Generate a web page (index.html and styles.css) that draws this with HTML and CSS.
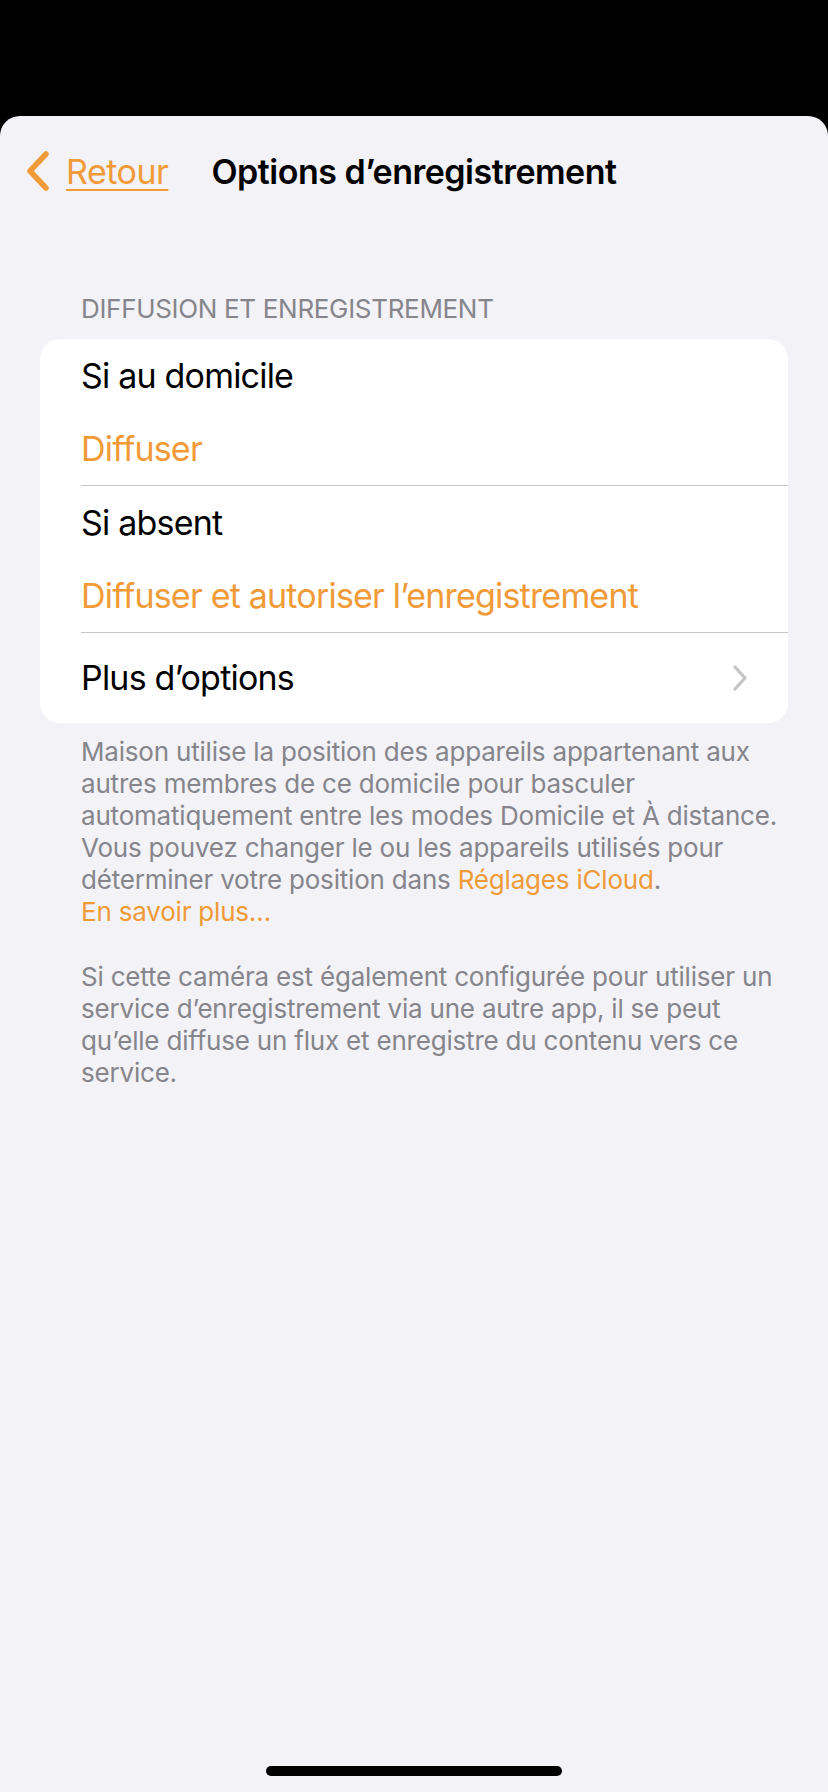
FILE: index.html
```html
<!DOCTYPE html>
<html lang="fr">
<head>
<meta charset="utf-8">
<title>Options d’enregistrement</title>
<link rel="stylesheet" href="styles.css">
</head>
<body>
<div class="top-bar"></div>
<main class="sheet">
  <header class="nav">
    <a class="back" href="#">
      <svg class="back-chevron" width="24" height="40" viewBox="0 0 24 40"><path d="M20 3 L4 20 L20 37" fill="none" stroke="currentColor" stroke-width="5.5" stroke-linecap="round" stroke-linejoin="round"/></svg>
      <span class="back-label">Retour</span>
    </a>
    <h1 class="title">Options d’enregistrement</h1>
    <span class="nav-spacer"></span>
  </header>

  <section class="group">
    <h2 class="group-header">Diffusion et enregistrement</h2>
    <div class="card">
      <div class="cell cell-value">
        <div class="cell-label">Si au domicile</div>
        <div class="cell-detail">Diffuser</div>
      </div>
      <div class="cell cell-value">
        <div class="cell-label">Si absent</div>
        <div class="cell-detail">Diffuser et autoriser l’enregistrement</div>
      </div>
      <div class="cell cell-link">
        <div class="cell-label">Plus d’options</div>
        <svg class="disclosure" width="16" height="26" viewBox="0 0 16 26"><path d="M3 2 L13 13 L3 24" fill="none" stroke="currentColor" stroke-width="3.2" stroke-linecap="round" stroke-linejoin="round"/></svg>
      </div>
    </div>
    <p class="footer">Maison utilise la position des appareils appartenant aux autres membres de ce domicile pour basculer automatiquement entre les modes Domicile et À distance. Vous pouvez changer le ou les appareils utilisés pour déterminer votre position dans <a class="link" href="#">Réglages iCloud</a>.<br><a class="link" href="#">En savoir plus…</a></p>
    <p class="footer footer-second">Si cette caméra est également configurée pour utiliser un service d’enregistrement via une autre app, il se peut qu’elle diffuse un flux et enregistre du contenu vers ce service.</p>
  </section>

  <div class="home-indicator"></div>
</main>
</body>
</html>
```

FILE: styles.css
```css
* { box-sizing: border-box; }

html, body {
  margin: 0;
  padding: 0;
  background: #000;
  font-family: "Inter", "Roboto", "Liberation Sans", sans-serif;
  -webkit-font-smoothing: antialiased;
}

.top-bar {
  height: 116px;
  background: #000;
}

.sheet {
  height: 1676px;
  background: #f2f2f7;
  border-radius: 20px 20px 0 0;
  display: flex;
  flex-direction: column;
}

.nav {
  height: 110px;
  display: grid;
  grid-template-columns: 1fr auto 1fr;
  align-items: center;
}

.back {
  display: flex;
  align-items: center;
  color: #f19a38;
  text-decoration: none;
  padding-left: 26px;
  justify-self: start;
}

.back-chevron {
  display: block;
  margin-right: 16px;
}

.back-label {
  font-size: 34px;
  letter-spacing: -0.5px;
  text-decoration: underline;
  text-decoration-thickness: 2px;
  text-underline-offset: 5px;
}

.title {
  margin: 0;
  font-size: 34px;
  font-weight: 600;
  letter-spacing: -0.5px;
  color: #000;
}

.group {
  padding: 0 40px;
}

.group-header {
  margin: 67px 0 14px 41px;
  font-size: 26px;
  line-height: 32px;
  font-weight: 400;
  text-transform: uppercase;
  color: #85858b;
  letter-spacing: -0.32px;
}

.card {
  background: #fff;
  border-radius: 20px;
  overflow: hidden;
}

.cell {
  margin-left: 41px;
  border-bottom: 1px solid #c6c6c8;
}

.cell:last-child {
  border-bottom: none;
}

.cell-value {
  padding: 17px 0 16px 0;
  display: flex;
  flex-direction: column;
  gap: 33px;
}

.cell-label,
.cell-detail {
  font-size: 34px;
  line-height: 40px;
  letter-spacing: -0.8px;
  color: #000;
}

.cell-detail {
  color: #f19a38;
}

.cell-link {
  height: 90px;
  display: flex;
  align-items: center;
  justify-content: space-between;
  padding-right: 40px;
}

.disclosure {
  display: block;
  color: #c4c4c7;
}

.footer {
  margin: 13px 0 0 41px;
  font-size: 26px;
  line-height: 32px;
  color: #85858b;
  letter-spacing: -0.2px;
}

.footer-second {
  margin-top: 33px;
}

.link {
  color: #f19a38;
  text-decoration: none;
}

.home-indicator {
  margin: auto auto 16px auto;
  width: 296px;
  height: 10px;
  border-radius: 5px;
  background: #000;
}
```
